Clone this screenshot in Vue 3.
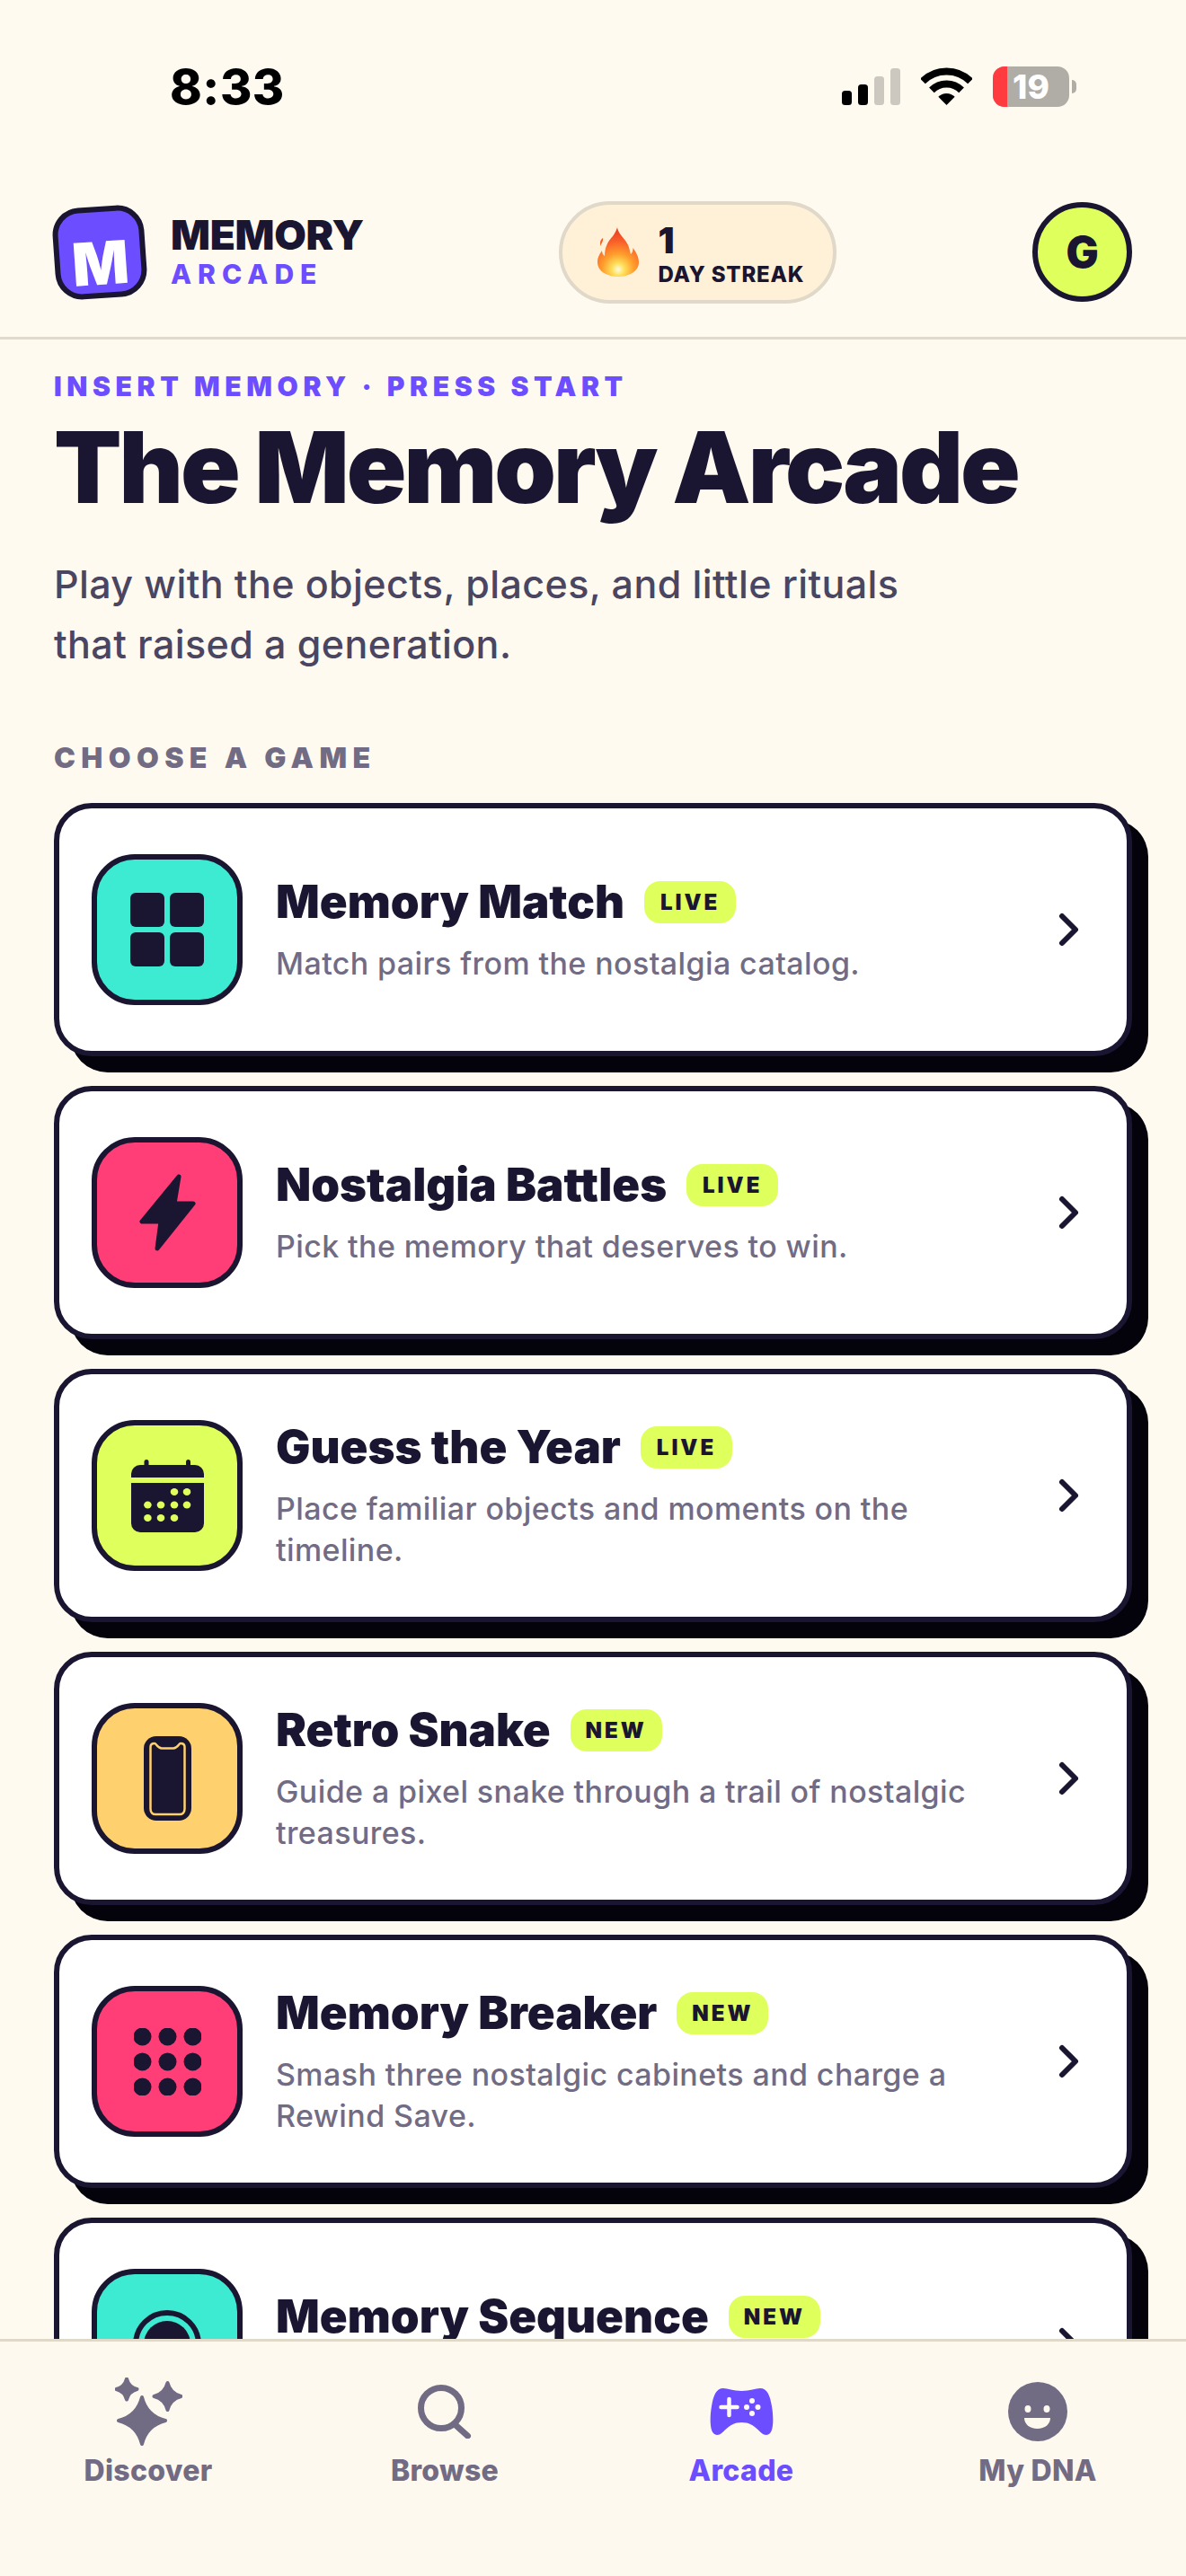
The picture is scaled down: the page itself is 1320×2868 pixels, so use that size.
<script setup>
const games = [
  { name: 'Memory Match', badge: 'LIVE', desc: 'Match pairs from the nostalgia catalog.', color: 'teal', icon: 'grid' },
  { name: 'Nostalgia Battles', badge: 'LIVE', desc: 'Pick the memory that deserves to win.', color: 'pink', icon: 'bolt' },
  { name: 'Guess the Year', badge: 'LIVE', desc: 'Place familiar objects and moments on the timeline.', color: 'lime', icon: 'calendar' },
  { name: 'Retro Snake', badge: 'NEW', desc: 'Guide a pixel snake through a trail of nostalgic treasures.', color: 'amber', icon: 'phone' },
  { name: 'Memory Breaker', badge: 'NEW', desc: 'Smash three nostalgic cabinets and charge a Rewind Save.', color: 'pink', icon: 'dots' },
  { name: 'Memory Sequence', badge: 'NEW', desc: '', color: 'teal', icon: 'disc' }
]
const calDots = [
  [48, 36], [62, 36],
  [18.4, 50.5], [33, 50.5], [48, 50.5], [62, 50.5],
  [18.4, 65], [33, 65], [48, 65]
]
const gridDots = [9.5, 37.5, 65.5]
function star(cx, cy, r) {
  const c = r * 0.2
  return `M${cx} ${cy - r}Q${cx + c} ${cy - c} ${cx + r} ${cy}Q${cx + c} ${cy + c} ${cx} ${cy + r}Q${cx - c} ${cy + c} ${cx - r} ${cy}Q${cx - c} ${cy - c} ${cx} ${cy - r}Z`
}
const sparkles = [star(30, 48, 26), star(13, 13, 11.5), star(58.5, 21, 15)]
</script>

<template>
  <div class="screen">
    <div class="status">
      <span class="time">8:33</span>
      <div class="status-icons">
        <svg class="signal" width="65" height="41" viewBox="0 0 65 41">
          <rect x="0" y="25" width="11" height="16" rx="3.5" fill="#000" />
          <rect x="18" y="18" width="11" height="23" rx="3.5" fill="#000" />
          <rect x="36" y="9" width="11" height="32" rx="3.5" fill="#ccc8bf" />
          <rect x="54" y="0" width="11" height="41" rx="3.5" fill="#ccc8bf" />
        </svg>
        <svg class="wifi" width="57" height="42" viewBox="0 0 57 42">
          <path d="M2 15.5A37.5 37.5 0 0 1 55 15.5" fill="none" stroke="#000" stroke-width="8" />
          <path d="M11.9 25.4A23.5 23.5 0 0 1 45.1 25.4" fill="none" stroke="#000" stroke-width="8" />
          <path d="M28.5 42L19.3 32.8A13 13 0 0 1 37.7 32.8Z" fill="#000" />
        </svg>
        <div class="battery">
          <div class="battery-body">
            <i class="battery-low"></i>
            <span class="battery-num">19</span>
          </div>
          <i class="battery-nub"></i>
        </div>
      </div>
    </div>

    <header class="header">
      <div class="brand">
        <div class="logo"><span>M</span></div>
        <div class="brand-text">
          <div class="brand-top">MEMORY</div>
          <div class="brand-sub">ARCADE</div>
        </div>
      </div>
      <div class="streak">
        <svg class="flame" width="46" height="55" viewBox="0 0 46 55">
          <defs>
            <radialGradient id="fl" gradientUnits="userSpaceOnUse" cx="23" cy="47" r="46">
              <stop offset="0" stop-color="#fffbe2" />
              <stop offset="0.14" stop-color="#ffe25e" />
              <stop offset="0.38" stop-color="#ff9e2c" />
              <stop offset="0.68" stop-color="#f8602a" />
              <stop offset="1" stop-color="#ea3a20" />
            </radialGradient>
          </defs>
          <path d="M22 0C23 7 29 11 33 18C36 23 36 28 37 30C39 28 39.500 26 39.500 23C43 28 46 33 46 39C46 49 35 55 23 55C11 55 0 49 0 39C0 33 3 29 5 26C5 28 6 31 8 32C8 22 12 15 17 10C19 7 21 4 22 0Z" fill="url(#fl)" />
          <path d="M6 12C7 15 4 18 3.500 21C2.500 17 3 14 6 12Z" fill="#f8602a" />
        </svg>
        <div class="streak-text">
          <div class="streak-num">1</div>
          <div class="streak-label">DAY STREAK</div>
        </div>
      </div>
      <div class="avatar">G</div>
    </header>

    <main class="main">
      <div class="eyebrow">INSERT MEMORY · PRESS START</div>
      <h1 class="title">The Memory Arcade</h1>
      <p class="sub">Play with the objects, places, and little rituals that raised a generation.</p>
      <div class="section">CHOOSE A GAME</div>

      <div class="list">
        <div v-for="g in games" :key="g.name" class="card">
          <div class="tile" :class="g.color">
            <svg v-if="g.icon === 'grid'" width="82" height="82" viewBox="0 0 82 82" fill="#1a1530">
              <rect x="0" y="0" width="38" height="38" rx="6" />
              <rect x="44" y="0" width="38" height="38" rx="6" />
              <rect x="0" y="44" width="38" height="38" rx="6" />
              <rect x="44" y="44" width="38" height="38" rx="6" />
            </svg>
            <svg v-else-if="g.icon === 'bolt'" width="63" height="86" viewBox="0 0 63 86">
              <polygon points="44,3 3,53 24,53 20,83 60,33 39,33" fill="#1a1530" stroke="#1a1530" stroke-width="5" stroke-linejoin="round" />
            </svg>
            <svg v-else-if="g.icon === 'calendar'" width="81" height="81" viewBox="0 0 81 81" fill="#1a1530">
              <rect x="14.500" y="0" width="5" height="12" rx="2.500" />
              <rect x="61" y="0" width="5" height="12" rx="2.500" />
              <path d="M0 20V16A10 10 0 0 1 10 6H71A10 10 0 0 1 81 16V20Z" />
              <path d="M0 26H81V71A10 10 0 0 1 71 81H10A10 10 0 0 1 0 71Z" />
              <ellipse v-for="d in calDots" :key="d.join()" :cx="d[0]" :cy="d[1]" rx="4.300" ry="4" fill="#dfff5c" />
            </svg>
            <svg v-else-if="g.icon === 'phone'" width="53" height="94" viewBox="0 0 53 94">
              <rect x="0" y="0" width="53" height="94" rx="14" fill="#1a1530" />
              <path d="M12 8C9 8 7.500 9.500 7.500 12V81C7.500 85 10 87 13 87H40C43 87 45.500 85 45.500 81V12C45.500 9.500 44 8 41 8C39 8 38 13.500 33 13.500H20C15 13.500 14 8 12 8Z" fill="none" stroke="#ffd06e" stroke-width="2.500" />
            </svg>
            <svg v-else-if="g.icon === 'dots'" width="75" height="75" viewBox="0 0 75 75" fill="#1a1530">
              <template v-for="y in gridDots" :key="y">
                <circle v-for="x in gridDots" :key="x" :cx="x" :cy="y" r="10" />
              </template>
            </svg>
            <svg v-else width="76" height="76" viewBox="0 0 76 76">
              <circle cx="38" cy="38" r="35" fill="none" stroke="#1a1530" stroke-width="6" />
              <circle cx="38" cy="38" r="26" fill="#1a1530" />
            </svg>
          </div>
          <div class="info">
            <div class="name-row">
              <span class="name">{{ g.name }}</span>
              <span class="badge">{{ g.badge }}</span>
            </div>
            <div class="desc">{{ g.desc }}</div>
          </div>
          <svg class="chev" width="36" height="48" viewBox="0 0 36 48">
            <path d="M12 9L27 24L12 39" fill="none" stroke="#1a1530" stroke-width="6" stroke-linecap="round" stroke-linejoin="round" />
          </svg>
        </div>
      </div>
    </main>

    <nav class="tabs">
      <div class="tab">
        <div class="tab-icon">
          <svg width="75" height="76" viewBox="0 0 75 76" fill="#726b84" stroke="#726b84" stroke-width="4" stroke-linejoin="round">
            <path v-for="p in sparkles" :key="p" :d="p" />
          </svg>
        </div>
        <span class="tab-label">Discover</span>
      </div>
      <div class="tab">
        <div class="tab-icon">
          <svg width="60" height="60" viewBox="0 0 60 60" fill="none" stroke="#726b84" stroke-width="7" stroke-linecap="round">
            <circle cx="26" cy="26" r="22.500" />
            <path d="M41 44L55.500 57" />
          </svg>
        </div>
        <span class="tab-label">Browse</span>
      </div>
      <div class="tab active">
        <div class="tab-icon">
          <svg width="71" height="52" viewBox="0 0 71 52">
            <path d="M15 0C20 0 26 3 35.500 3C45 3 51 0 56 0C64 0 67 8 69 20C71 32 72 52 63 52C55 52 52 38 35.500 38C19 38 16 52 8 52C-1 52 0 32 2 20C4 8 7 0 15 0Z" fill="#6c4dff" />
            <path d="M21.500 12V30M12.500 21H30.500" stroke="#fffaf0" stroke-width="4.500" stroke-linecap="round" />
            <circle cx="47" cy="14" r="3" fill="#fffaf0" />
            <circle cx="41" cy="21" r="3" fill="#fffaf0" />
            <circle cx="53.500" cy="21" r="3" fill="#fffaf0" />
            <circle cx="47" cy="28" r="3" fill="#fffaf0" />
          </svg>
        </div>
        <span class="tab-label">Arcade</span>
      </div>
      <div class="tab">
        <div class="tab-icon">
          <svg width="66" height="66" viewBox="0 0 66 66">
            <circle cx="33" cy="33" r="33" fill="#726b84" />
            <ellipse cx="22" cy="30" rx="3.500" ry="4" fill="#fdf9ef" />
            <ellipse cx="43" cy="30" rx="3.500" ry="4" fill="#fdf9ef" />
            <path d="M18 40H47C47 47 41 52 32.500 52C24 52 18 47 18 40Z" fill="#fdf9ef" />
          </svg>
        </div>
        <span class="tab-label">My DNA</span>
      </div>
    </nav>
  </div>
</template>

<style scoped>
.screen {
  width: 1320px;
  height: 2868px;
  background: #fffaf0;
  display: flex;
  flex-direction: column;
  overflow: hidden;
  font-family: Inter, "Noto Sans", sans-serif;
  color: #1a1530;
}
.status {
  height: 186px;
  flex: none;
  box-sizing: border-box;
  padding: 70px 122px 0 189px;
  display: flex;
  justify-content: space-between;
  align-items: flex-start;
}
.time {
  font-size: 54px;
  line-height: 54px;
  font-weight: 800;
  letter-spacing: 0.5px;
  color: #000;
}
.status-icons {
  display: flex;
  align-items: flex-end;
  gap: 23px;
  margin-top: 4px;
  height: 45px;
}
.signal,
.wifi {
  margin-bottom: 2px;
}
.battery {
  display: flex;
  align-items: center;
  gap: 3px;
}
.battery-body {
  position: relative;
  width: 85px;
  height: 45px;
  border-radius: 13px;
  background: #b0ada6;
  overflow: hidden;
  display: flex;
  align-items: center;
  justify-content: center;
}
.battery-low {
  position: absolute;
  left: 0;
  top: 0;
  bottom: 0;
  width: 16px;
  background: #ff3b3f;
}
.battery-num {
  position: relative;
  font-size: 37px;
  font-weight: 800;
  color: #fff;
  line-height: 45px;
}
.battery-nub {
  width: 5px;
  height: 15px;
  border-radius: 0 5px 5px 0;
  background: #b0ada6;
}
.header {
  height: 192px;
  flex: none;
  box-sizing: border-box;
  border-bottom: 3px solid #e0d8c8;
  padding: 0 60px;
  display: flex;
  align-items: center;
  justify-content: space-between;
}
.brand {
  display: flex;
  align-items: center;
  gap: 28px;
}
.logo {
  width: 102px;
  height: 102px;
  box-sizing: border-box;
  border: 6px solid #1a1530;
  border-radius: 30px;
  background: #6c4dff;
  transform: rotate(-4deg);
  display: flex;
  align-items: center;
  justify-content: center;
  padding-top: 23px;
  color: #fff;
  font-size: 66px;
  font-weight: 900;
  line-height: 66px;
}
.brand-text {
  margin-top: -3px;
}
.brand-top {
  font-size: 46px;
  line-height: 48px;
  font-weight: 900;
  letter-spacing: -0.3px;
}
.brand-sub {
  font-size: 30px;
  line-height: 32px;
  font-weight: 800;
  letter-spacing: 7px;
  color: #6c4dff;
  margin-top: 4px;
}
.streak {
  width: 309px;
  height: 114px;
  box-sizing: border-box;
  border: 4px solid #e0d8c8;
  border-radius: 57px;
  background: #fff1d8;
  padding-left: 39px;
  display: flex;
  align-items: center;
  gap: 21px;
}
.streak-text {
  margin-top: 6px;
}
.streak-num {
  font-size: 40px;
  line-height: 42px;
  font-weight: 900;
}
.streak-label {
  font-size: 24px;
  line-height: 28px;
  font-weight: 800;
  letter-spacing: 0.8px;
  margin-top: 3px;
  white-space: nowrap;
}
.avatar {
  width: 111px;
  height: 111px;
  box-sizing: border-box;
  border: 6px solid #1a1530;
  border-radius: 50%;
  background: #dfff5c;
  display: flex;
  align-items: center;
  justify-content: center;
  font-size: 48px;
  font-weight: 900;
}
.main {
  flex: 1;
  min-height: 0;
  overflow: hidden;
  padding: 34px 60px 0;
}
.eyebrow {
  font-size: 30px;
  line-height: 36px;
  font-weight: 900;
  letter-spacing: 5.6px;
  color: #6c4dff;
}
.title {
  margin: 15px 0 0;
  font-size: 110px;
  line-height: 115px;
  font-weight: 900;
  letter-spacing: -3px;
  white-space: nowrap;
}
.sub {
  margin: 39px 0 0;
  max-width: 970px;
  font-size: 43px;
  line-height: 67px;
  font-weight: 500;
  letter-spacing: 0.4px;
  color: #4a4560;
}
.section {
  margin-top: 75px;
  font-size: 32px;
  line-height: 36px;
  font-weight: 900;
  letter-spacing: 6.4px;
  color: #726b84;
}
.list {
  margin-top: 32px;
  display: flex;
  flex-direction: column;
  gap: 33px;
}
.card {
  height: 282px;
  flex: none;
  box-sizing: border-box;
  border: 6px solid #1a1530;
  border-radius: 42px;
  background: #fff;
  box-shadow: 18px 18px 0 #04020a;
  padding: 0 48px 0 36px;
  display: flex;
  align-items: center;
  gap: 37px;
}
.tile {
  width: 168px;
  height: 168px;
  flex: none;
  box-sizing: border-box;
  border: 6px solid #1a1530;
  border-radius: 48px;
  display: flex;
  align-items: center;
  justify-content: center;
}
.teal { background: #3debd2; }
.pink { background: #ff3d77; }
.lime { background: #dfff5c; }
.amber { background: #ffd06e; }
.info {
  flex: 1;
  min-width: 0;
  margin-top: 2px;
}
.name-row {
  display: flex;
  align-items: center;
  gap: 22px;
}
.name {
  font-size: 51px;
  line-height: 56px;
  font-weight: 900;
  white-space: nowrap;
}
.badge {
  min-width: 102px;
  height: 47px;
  box-sizing: border-box;
  border-radius: 18px;
  background: #dfff5c;
  text-align: center;
  font-size: 24px;
  line-height: 47px;
  font-weight: 900;
  letter-spacing: 3px;
}
.desc {
  margin-top: 18px;
  min-height: 46px;
  font-size: 34px;
  line-height: 46px;
  font-weight: 500;
  letter-spacing: 0.4px;
  color: #726b84;
}
.chev {
  flex: none;
}
.tabs {
  height: 264px;
  flex: none;
  box-sizing: border-box;
  border-top: 3px solid #e0d8c8;
  background: #fdf9ef;
  padding-top: 36px;
  display: flex;
  position: relative;
}
.tab {
  flex: 1;
  display: flex;
  flex-direction: column;
  align-items: center;
  color: #726b84;
}
.tab.active {
  color: #6c4dff;
}
.tab-icon {
  height: 84px;
  display: flex;
  align-items: center;
  justify-content: center;
}
.tab-label {
  margin-top: 6px;
  font-size: 32px;
  line-height: 36px;
  font-weight: 800;
  letter-spacing: 0.3px;
}
</style>
